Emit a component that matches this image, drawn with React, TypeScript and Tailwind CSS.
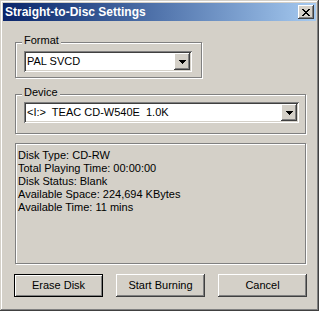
import React from 'react';

const face = 'bg-[#d4d0c8]';
const raised = 'shadow-[inset_-1px_-1px_0_#404040,inset_1px_1px_0_#fff,inset_-2px_-2px_0_#808080]';
const sunken = 'shadow-[inset_1px_1px_0_#808080,inset_-1px_-1px_0_#fff,inset_2px_2px_0_#404040,inset_-2px_-2px_0_#d4d0c8]';
const etched = 'border border-[#808080] shadow-[inset_1px_1px_0_#fff,1px_1px_0_#fff]';

function Arrow() {
  return (
    <svg width="7" height="4" viewBox="0 0 7 4" shapeRendering="crispEdges">
      <path d="M0 0h7v1H0zM1 1h5v1H1zM2 2h3v1H2zM3 3h1v1H3z" fill="#000" />
    </svg>
  );
}

function Combo({ width, text }: { width: string; text: string }) {
  return (
    <div className={`${width} h-[21px] bg-white ${sunken} flex items-center p-[2px]`}>
      <span className="flex-1 pl-[1px] text-[11px] leading-[13px] whitespace-pre text-black">{text}</span>
      <div className={`w-[16px] h-[17px] ${face} ${raised} flex items-center justify-center`}>
        <Arrow />
      </div>
    </div>
  );
}

function Group({ label, width, height, children }: { label: string; width: string; height: string; children: React.ReactNode }) {
  return (
    <div className={`${width} ${height} ${etched} flex flex-col pl-[8px]`}>
      <span className={`self-start -ml-[2px] -mt-[9px] px-[2px] ${face} text-[11px] leading-[13px]`}>{label}</span>
      {children}
    </div>
  );
}

function Button({ label, isDefault }: { label: string; isDefault?: boolean }) {
  const bevel = isDefault
    ? 'border border-black shadow-[inset_1px_1px_0_#fff,inset_-1px_-1px_0_#808080]'
    : raised;
  return (
    <button className={`w-[89px] h-[23px] ${face} ${bevel} text-[11px] leading-[13px] text-black flex items-center justify-center`}>
      {label}
    </button>
  );
}

export default function App() {
  return (
    <div
      className={`w-[319px] h-[311px] ${face} p-[3px] flex flex-col font-['Liberation_Sans',Arial,sans-serif] text-black shadow-[inset_-1px_-1px_0_#404040,inset_1px_1px_0_#d4d0c8,inset_-2px_-2px_0_#808080,inset_2px_2px_0_#fff]`}
    >
      {/* Title bar */}
      <div className="h-[18px] flex items-center justify-between pl-[2px] pr-[2px] bg-gradient-to-r from-[#0a246a] to-[#a6caf0]">
        <span className="text-white font-bold text-[12px] leading-[14px]">Straight-to-Disc Settings</span>
        <div className={`w-[16px] h-[14px] ${face} ${raised} flex items-center justify-center`}>
          <svg width="8" height="7" viewBox="0 0 8 7" shapeRendering="crispEdges">
            <path
              d="M0 0h2v1H0zM6 0h2v1H6zM1 1h2v1H1zM5 1h2v1H5zM2 2h4v1H2zM3 3h2v1H3zM2 4h4v1H2zM1 5h2v1H1zM5 5h2v1H5zM0 6h2v1H0zM6 6h2v1H6z"
              fill="#000"
            />
          </svg>
        </div>
      </div>

      <div className="flex flex-col pl-[12px]">
        <div className="mt-[21px]">
          <Group label="Format" width="w-[187px]" height="h-[36px]">
            <div className="mt-[4px]">
              <Combo width="w-[168px]" text="PAL SVCD" />
            </div>
          </Group>
        </div>

        <div className="mt-[16px]">
          <Group label="Device" width="w-[291px]" height="h-[40px]">
            <div className="mt-[3px]">
              <Combo width="w-[275px]" text="<I:>  TEAC CD-W540E  1.0K" />
            </div>
          </Group>
        </div>

        {/* Disk info */}
        <div className={`mt-[9px] w-[291px] h-[121px] ${etched} pt-[5px] pl-[2px] text-[11px] leading-[13px]`}>
          <div>Disk Type: CD-RW</div>
          <div>Total Playing Time: 00:00:00</div>
          <div>Disk Status: Blank</div>
          <div>Available Space: 224,694 KBytes</div>
          <div>Available Time: 11 mins</div>
        </div>

        <div className="mt-[10px] -ml-[1px] flex gap-[13px]">
          <Button label="Erase Disk" isDefault />
          <Button label="Start Burning" />
          <Button label="Cancel" />
        </div>
      </div>
    </div>
  );
}
